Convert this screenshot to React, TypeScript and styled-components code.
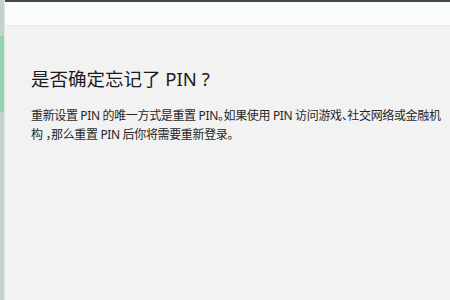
import React from 'react'
import styled, { createGlobalStyle } from 'styled-components'

const GlobalStyle = createGlobalStyle`
  html, body {
    margin: 0;
    padding: 0;
    background: #f2f2f2;
  }
  body {
    font-family: "Noto Sans", "Noto Sans CJK SC", sans-serif;
  }
`

const Window = styled.div`
  width: 450px;
  height: 300px;
  display: flex;
  overflow: hidden;
  background: #f2f2f2;
`

const EdgeStrip = styled.div`
  width: 4px;
  flex: none;
  display: flex;
  flex-direction: column;
  background: #c3d3cb;
  border-right: 1px solid #dfe8e3;

  .accent {
    margin-top: 36px;
    height: 76px;
    background: #8fd3b1;
  }
`

const Main = styled.div`
  flex: 1;
  min-width: 0;
  display: flex;
  flex-direction: column;
`

const TopBar = styled.div`
  height: 2px;
  background: #3e4c4a;
`

const Header = styled.div`
  height: 23px;
  background: #fbfdfd;
  border-bottom: 1px solid #eaeded;
`

const Content = styled.div`
  padding: 39px 0 0 26px;
`

const Title = styled.h1`
  margin: 0;
  font-size: 18.5px;
  font-weight: 400;
  line-height: 27px;
  color: #1b1b1b;
`

const Body = styled.p`
  margin: 14px 0 0;
  width: 418px;
  font-size: 12px;
  line-height: 19px;
  color: #262626;
  font-feature-settings: "halt";
  letter-spacing: -0.35px;
`

export default function App() {
  return (
    <>
      <GlobalStyle />
      <Window>
        <EdgeStrip>
          <div className="accent" />
        </EdgeStrip>
        <Main>
          <TopBar />
          <Header />
          <Content>
            <Title>是否确定忘记了 PIN ?</Title>
            <Body>
              重新设置 PIN 的唯一方式是重置 PIN。如果使用 PIN 访问游戏、社交网络或金融机构 ，那么重置 PIN 后你将需要重新登录。
            </Body>
          </Content>
        </Main>
      </Window>
    </>
  )
}
